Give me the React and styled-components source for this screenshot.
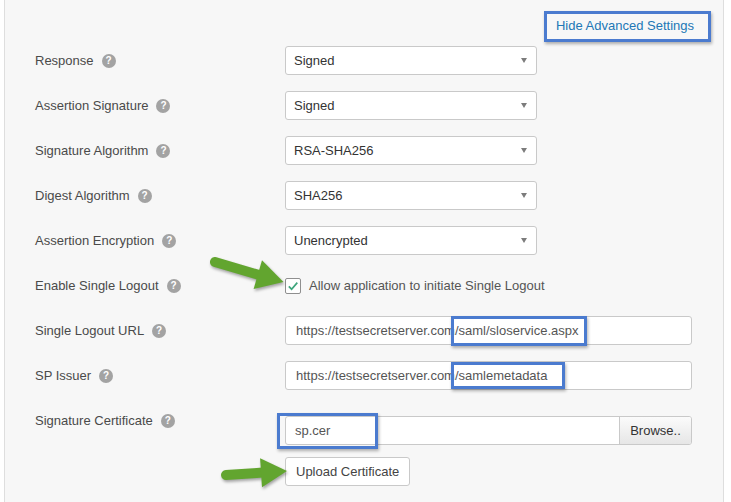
import React from 'react';
import styled, { createGlobalStyle } from 'styled-components';

const GlobalStyle = createGlobalStyle`
  html, body {
    margin: 0;
    padding: 0;
    background: #ffffff;
  }
  body {
    font-family: 'Liberation Sans', Arial, sans-serif;
  }
`;

const Page = styled.div`
  padding-left: 4px;
  height: 502px;
  overflow: hidden;
`;

const Panel = styled.div`
  box-sizing: border-box;
  width: 720px;
  min-height: 502px;
  background: #f7f7f7;
  border-left: 1px solid #dedede;
  border-right: 1px solid #dedede;
  padding: 11px 12px 0 30px;
`;

const TopBar = styled.div`
  display: flex;
  justify-content: flex-end;
`;

const CalloutBox = styled.div`
  border: 3px solid #4b7bcf;
  box-shadow: 1px 2px 3px rgba(0, 0, 0, 0.3);
  padding: 4px 14px 6px 9px;
  font-size: 13px;
  line-height: 15px;
`;

const AdvancedLink = styled.a`
  display: block;
  font-size: 13px;
  line-height: 15px;
  color: #2277b6;
  text-decoration: none;
  cursor: pointer;
`;

const Form = styled.div`
  display: flex;
  flex-direction: column;
  gap: 16px;
  margin-top: 4px;
`;

const Row = styled.div`
  display: grid;
  grid-template-columns: 250px 407px;
  margin-top: ${(p) => p.$mt || 0}px;
`;

const Label = styled.div`
  display: flex;
  align-items: center;
  gap: 8px;
  font-size: 13px;
  color: #4a4a4a;
  line-height: ${(p) => (p.$top ? '14px' : '29px')};
  align-self: ${(p) => (p.$top ? 'start' : 'center')};
  margin-top: ${(p) => (p.$top ? '-2px' : '0')};
`;

const Help = styled.span`
  display: inline-flex;
  align-items: center;
  justify-content: center;
  width: 14px;
  height: 14px;
  border-radius: 50%;
  background: #a3a3a3;
  color: #ffffff;
  font-size: 10px;
  font-weight: bold;
  line-height: 1;
`;

const Control = styled.div`
  position: relative;
  display: flex;
  flex-direction: ${(p) => (p.$column ? 'column' : 'row')};
  align-items: ${(p) => (p.$column ? 'flex-start' : 'center')};
  gap: ${(p) => (p.$column ? '12px' : '8px')};
  min-height: 29px;
`;

const Select = styled.div`
  box-sizing: border-box;
  width: 252px;
  height: 29px;
  display: flex;
  align-items: center;
  justify-content: space-between;
  padding: 0 9px 0 8px;
  background: #ffffff;
  border: 1px solid #c9c9c9;
  border-radius: 3px;
  font-size: 13px;
  color: #333333;
`;

const Caret = styled.span`
  width: 0;
  height: 0;
  border-left: 3.5px solid transparent;
  border-right: 3.5px solid transparent;
  border-top: 5px solid #7c7c7c;
`;

const Field = styled.div`
  box-sizing: border-box;
  width: 407px;
  height: 29px;
  display: flex;
  align-items: center;
  padding: 0 0 0 ${(p) => (p.$file ? 9 : 10)}px;
  background: #ffffff;
  border: 1px solid #c9c9c9;
  border-radius: 3px;
  font-size: 13px;
  color: #555555;
  white-space: nowrap;
`;

const Marked = styled.span`
  position: relative;
  align-self: stretch;
  display: flex;
  align-items: center;

  &::after {
    content: '';
    position: absolute;
    top: ${(p) => p.$t}px;
    bottom: ${(p) => p.$b}px;
    left: ${(p) => p.$l}px;
    right: ${(p) => p.$r}px;
    border: 3px solid #4b7bcf;
    box-shadow: 1px 2px 3px rgba(0, 0, 0, 0.3);
    pointer-events: none;
    z-index: 1;
  }
`;

const FileName = styled.div`
  flex: 1;
  display: flex;
  align-self: stretch;
`;

const Browse = styled.button`
  align-self: stretch;
  width: 72px;
  margin: 0;
  padding: 0;
  border: none;
  border-left: 1px solid #c9c9c9;
  border-radius: 0 2px 2px 0;
  background: linear-gradient(#fbfbfb, #e6e6e6);
  font-family: inherit;
  font-size: 13px;
  color: #333333;
`;

const Button = styled.button`
  box-sizing: border-box;
  height: 29px;
  padding: 0 10px;
  background: #ffffff;
  border: 1px solid #c9c9c9;
  border-radius: 3px;
  font-family: inherit;
  font-size: 13px;
  color: #444444;
`;

const Box = styled.span`
  box-sizing: border-box;
  width: 16px;
  height: 16px;
  display: inline-flex;
  align-items: center;
  justify-content: center;
  background: #ffffff;
  border: 1px solid #8f8f8f;
  border-radius: 2px;
`;

const CheckText = styled.span`
  font-size: 13px;
  color: #555555;
`;

const Arrow = styled.svg`
  position: absolute;
  left: ${(p) => p.$left}px;
  top: ${(p) => p.$top}px;
  z-index: 2;
  overflow: visible;
  filter: drop-shadow(1px 2px 1.5px rgba(0, 0, 0, 0.35));
`;

const GREEN = '#62a52f';

function HelpIcon() {
  return <Help>?</Help>;
}

function Dropdown({ value }) {
  return (
    <Select>
      {value}
      <Caret />
    </Select>
  );
}

const selects = [
  ['Response', 'Signed'],
  ['Assertion Signature', 'Signed'],
  ['Signature Algorithm', 'RSA-SHA256'],
  ['Digest Algorithm', 'SHA256'],
  ['Assertion Encryption', 'Unencrypted'],
];

export default function App() {
  return (
    <Page>
      <GlobalStyle />
      <Panel>
        <TopBar>
          <CalloutBox>
            <AdvancedLink>Hide Advanced Settings</AdvancedLink>
          </CalloutBox>
        </TopBar>
        <Form>
          {selects.map(([label, value]) => (
            <Row key={label}>
              <Label>
                {label} <HelpIcon />
              </Label>
              <Control>
                <Dropdown value={value} />
              </Control>
            </Row>
          ))}

          <Row>
            <Label>
              Enable Single Logout <HelpIcon />
            </Label>
            <Control>
              <Arrow $left={-80} $top={-19} width="86" height="42" viewBox="0 0 86 42">
                <line x1="10" y1="10" x2="55" y2="23.3" stroke={GREEN} strokeWidth="10" strokeLinecap="round" />
                <polygon points="57,8.3 78.5,30 48.6,37" fill={GREEN} />
              </Arrow>
              <Box>
                <svg width="12" height="12" viewBox="0 0 12 12">
                  <path d="M1.8 6.4 L4.6 9.2 L10.3 2.6" fill="none" stroke="#3fa67d" strokeWidth="1.7" />
                </svg>
              </Box>
              <CheckText>Allow application to initiate Single Logout</CheckText>
            </Control>
          </Row>

          <Row>
            <Label>
              Single Logout URL <HelpIcon />
            </Label>
            <Control>
              <Field>
                https://testsecretserver.com
                <Marked $t={-1} $b={-2} $l={-4} $r={-8}>/saml/sloservice.aspx</Marked>
              </Field>
            </Control>
          </Row>

          <Row>
            <Label>
              SP Issuer <HelpIcon />
            </Label>
            <Control>
              <Field>
                https://testsecretserver.com
                <Marked $t={0} $b={0} $l={-4} $r={-18}>/samlemetadata</Marked>
              </Field>
            </Control>
          </Row>

          <Row $mt={10}>
            <Label $top>
              Signature Certificate <HelpIcon />
            </Label>
            <Control $column>
              <Field $file>
                <FileName>
                  <Marked $t={-4} $b={-5} $l={-18} $r={-48}>sp.cer</Marked>
                </FileName>
                <Browse>Browse..</Browse>
              </Field>
              <Arrow $left={-69} $top={34} width="78" height="46" viewBox="0 0 78 46">
                <line x1="10" y1="25" x2="47" y2="22.6" stroke={GREEN} strokeWidth="10" strokeLinecap="round" />
                <polygon points="44.1,8.2 71,21 46,37.2" fill={GREEN} />
              </Arrow>
              <Button>Upload Certificate</Button>
            </Control>
          </Row>
        </Form>
      </Panel>
    </Page>
  );
}
